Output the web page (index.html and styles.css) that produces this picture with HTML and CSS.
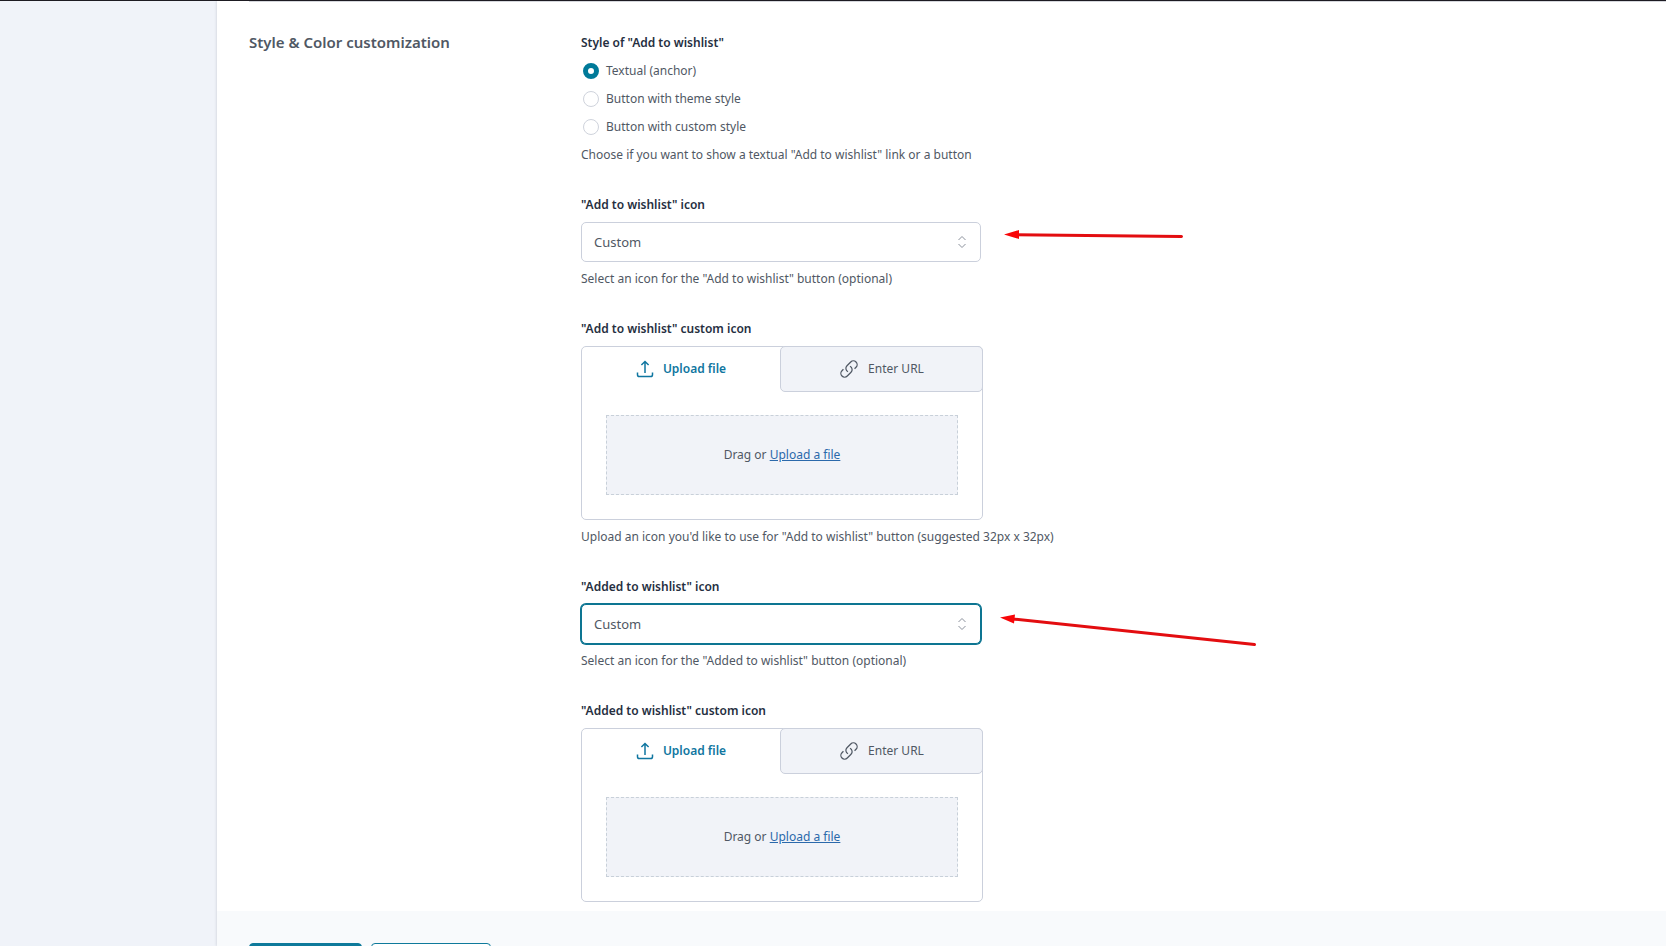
FILE: index.html
```html
<!DOCTYPE html>
<html lang="en">
<head>
<meta charset="utf-8">
<title>Style &amp; Color customization</title>
<link rel="stylesheet" href="styles.css">
</head>
<body>
<svg class="symbols" aria-hidden="true">
  <symbol id="upload" viewBox="0 0 18 18"><path d="M1.5 12.5v2.2q0 1.8 1.8 1.8h11.4q1.8 0 1.8-1.8v-2.2M9 13V1.7M5.4 5 9 1.5 12.600 5"/></symbol>
  <symbol id="link" viewBox="0 0 24 24"><path d="M13.190 8.688a4.500 4.500 0 0 1 1.242 7.244l-4.500 4.500a4.500 4.500 0 0 1-6.364-6.364l1.757-1.757m13.350-.622 1.757-1.757a4.500 4.500 0 0 0-6.364-6.364l-4.500 4.500a4.500 4.500 0 0 0 1.242 7.244"/></symbol>
  <symbol id="updown" viewBox="0 0 10 14"><path d="M1.500 5 5 1.500 8.500 5M1.500 9 5 12.500 8.500 9"/></symbol>
</svg>
<div class="app">
  <aside class="sidebar"></aside>
  <main class="panel">
    <form class="options">
      <h2 class="section-title">Style &amp; Color customization</h2>
      <div class="fields">
        <fieldset class="field style-field">
          <legend class="label">Style of "Add to wishlist"</legend>
          <div class="radios">
            <label class="radio"><input type="radio" name="style" checked>Textual (anchor)</label>
            <label class="radio"><input type="radio" name="style">Button with theme style</label>
            <label class="radio"><input type="radio" name="style">Button with custom style</label>
          </div>
          <p class="hint">Choose if you want to show a textual "Add to wishlist" link or a button</p>
        </fieldset>

        <div class="field">
          <label class="label" for="add-icon">"Add to wishlist" icon</label>
          <div class="select">
            <select id="add-icon"><option>Custom</option></select>
            <svg class="chevrons" aria-hidden="true"><use href="#updown"/></svg>
          </div>
          <p class="hint">Select an icon for the "Add to wishlist" button (optional)</p>
        </div>

        <div class="field">
          <h3 class="label">"Add to wishlist" custom icon</h3>
          <div class="uploader">
            <div class="tabs">
              <button type="button" class="tab active"><svg class="icon"><use href="#upload"/></svg>Upload file</button>
              <button type="button" class="tab"><svg class="icon link-icon"><use href="#link"/></svg>Enter URL</button>
            </div>
            <div class="dropzone"><span>Drag or <a href="#">Upload a file</a></span></div>
          </div>
          <p class="hint">Upload an icon you'd like to use for "Add to wishlist" button (suggested 32px x 32px)</p>
        </div>

        <div class="field">
          <label class="label" for="added-icon">"Added to wishlist" icon</label>
          <div class="select focused">
            <select id="added-icon"><option>Custom</option></select>
            <svg class="chevrons" aria-hidden="true"><use href="#updown"/></svg>
          </div>
          <p class="hint">Select an icon for the "Added to wishlist" button (optional)</p>
        </div>

        <div class="field">
          <h3 class="label">"Added to wishlist" custom icon</h3>
          <div class="uploader">
            <div class="tabs">
              <button type="button" class="tab active"><svg class="icon"><use href="#upload"/></svg>Upload file</button>
              <button type="button" class="tab"><svg class="icon link-icon"><use href="#link"/></svg>Enter URL</button>
            </div>
            <div class="dropzone"><span>Drag or <a href="#">Upload a file</a></span></div>
          </div>
        </div>
      </div>
    </form>
    <footer class="actions">
      <button type="button" class="action primary"></button>
      <button type="button" class="action secondary"></button>
    </footer>
  </main>
</div>
<svg class="arrows" width="300" height="440" viewBox="980 220 300 440" aria-hidden="true">
  <path class="shaft" d="M1015 234.700 1181.500 236.500M1012 618.900 1254.500 644.500"/>
  <path class="head" d="M1004 234.500 1019 230v9zM1000 617.500 1015 614.500l-1 9z"/>
</svg>
</body>
</html>
```
FILE: styles.css
```css
* { box-sizing: border-box; }

body {
  margin: 0;
  height: 100vh;
  overflow: hidden;
  border-top: 1px solid #1d1b22;
  background: #f0f3f9;
  color: #505864;
  font: 12px/20px "Noto Sans", sans-serif;
}

.symbols { display: none; }

.app { display: flex; height: 100%; }
.sidebar { flex: 0 0 217px; }

.panel {
  flex: 1;
  overflow: hidden;
  background: #fff;
  box-shadow: 0 0 3px rgba(30, 41, 59, .2);
}

.options {
  display: grid;
  grid-template-columns: 332px 1fr;
  margin-left: 32px;
  padding: 31px 0 9px;
  border-top: 1px solid #d5d7dc;
}

.section-title {
  margin: 0;
  font-size: 15px;
  font-weight: 600;
  line-height: 18px;
}

.fields { display: flex; flex-direction: column; gap: 30px; }

.field {
  display: flex;
  flex-direction: column;
  gap: 7px;
  min-width: 0;
  margin: 0;
  padding: 0;
  border: 0;
}

.style-field { gap: 4px; }

.label {
  margin: 0;
  padding: 0;
  color: #262f3f;
  font-size: 12px;
  font-weight: 600;
}

.hint { margin: 0; }

.radios { display: flex; flex-direction: column; padding: 4px 0 0 2px; }
.radio { display: flex; align-items: center; gap: 7px; height: 28px; }

.radio input {
  appearance: none;
  width: 16px;
  height: 16px;
  margin: 0;
  border: 1px solid #cfd3dc;
  border-radius: 50%;
  background: #fff;
}

.radio input:checked { border: 5px solid #007a99; }

.select { position: relative; max-width: 400px; }

.select select {
  appearance: none;
  display: block;
  width: 100%;
  height: 40px;
  padding: 0 12px;
  border: 1px solid #cbd0dc;
  border-radius: 5px;
  background: #fff;
  color: inherit;
  font: inherit;
  font-size: 13px;
}

.focused select {
  border-color: #0d7592;
  box-shadow: 0 0 0 1px #0d7592;
}

.chevrons {
  position: absolute;
  top: 13px;
  right: 14px;
  width: 10px;
  height: 14px;
  fill: none;
  stroke: #8b919c;
}

.uploader {
  max-width: 402px;
  border: 1px solid #cbd0dc;
  border-radius: 5px;
}

.tabs { display: grid; grid-template-columns: 198fr 203fr; margin: -1px -1px 0 0; }

.tab {
  display: flex;
  align-items: center;
  justify-content: center;
  gap: 9px;
  height: 46px;
  padding: 0;
  border: 1px solid #cbd0dc;
  border-radius: 5px;
  background: #f1f3f8;
  color: inherit;
  font: inherit;
}

.tab.active {
  border-color: transparent;
  background: none;
  color: #0f76a0;
  font-weight: 600;
}

.icon {
  width: 18px;
  height: 18px;
  fill: none;
  stroke: currentColor;
  stroke-width: 1.5;
}

.link-icon { width: 20px; height: 20px; }

.dropzone {
  display: flex;
  align-items: center;
  justify-content: center;
  height: 80px;
  margin: 23px 24px 24px;
  border: 1px dashed #c8d0d9;
  background: #f1f3f8;
}

.dropzone a { color: #2b69ab; }

.actions { display: flex; gap: 9px; padding: 32px; background: #f8fafc; }
.action { width: 113px; height: 38px; border: 1px solid #0e7a9b; border-radius: 4px; }
.primary { background: #0e7a9b; }
.secondary { width: 120px; background: #fff; }

.arrows { position: absolute; top: 220px; left: 980px; }
.shaft { fill: none; stroke: #e30d10; stroke-width: 3; stroke-linecap: round; }
.head { fill: #f80508; }
```
